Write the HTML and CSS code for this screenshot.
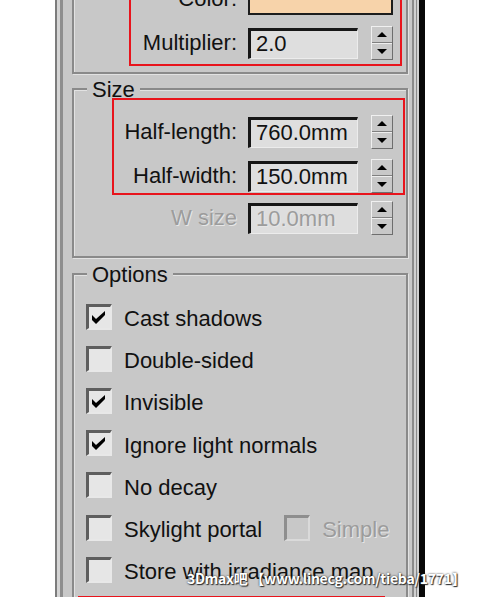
FILE: index.html
```html
<!DOCTYPE html>
<html lang="en">
<head>
    <meta charset="UTF-8">
    <meta name="viewport" content="width=device-width, initial-scale=1.0">
    <title>Area Light Parameters</title>
    <link rel="stylesheet" href="styles.css">
</head>
<body>

    <!-- Rollout panel -->
    <div class="panel">

        <!-- Intensity group (top part scrolled out of view) -->
        <div class="group group-intensity">
            <div class="mark mark-intensity">
                <div class="field-row">
                    <span class="field-label">Color:</span>
                    <span class="swatch"></span>
                </div>
                <div class="field-row">
                    <span class="field-label">Multiplier:</span>
                    <input class="field-input" type="text" value="2.0" readonly>
                    <span class="spinner"><span class="spin-up"></span><span class="spin-down"></span></span>
                </div>
            </div>
        </div>

        <!-- Size group -->
        <div class="group group-size">
            <div class="group-title">Size</div>
            <div class="mark mark-size">
                <div class="field-row">
                    <span class="field-label">Half-length:</span>
                    <input class="field-input" type="text" value="760.0mm" readonly>
                    <span class="spinner"><span class="spin-up"></span><span class="spin-down"></span></span>
                </div>
                <div class="field-row">
                    <span class="field-label">Half-width:</span>
                    <input class="field-input" type="text" value="150.0mm" readonly>
                    <span class="spinner"><span class="spin-up"></span><span class="spin-down"></span></span>
                </div>
            </div>
            <div class="field-row row-wsize disabled">
                <span class="field-label">W size</span>
                <input class="field-input" type="text" value="10.0mm" readonly>
                <span class="spinner"><span class="spin-up"></span><span class="spin-down"></span></span>
            </div>
        </div>

        <!-- Options group -->
        <div class="group group-options">
            <div class="group-title">Options</div>
            <ul class="check-list">
                <li class="check-row">
                    <span class="check"><svg width="21" height="21" viewBox="0 0 21 21"><polygon points="3,8 7,12 16,4 16,8 7,17 3,13" fill="#000"/></svg></span>Cast shadows
                </li>
                <li class="check-row">
                    <span class="check"></span>Double-sided
                </li>
                <li class="check-row">
                    <span class="check"><svg width="21" height="21" viewBox="0 0 21 21"><polygon points="3,8 7,12 16,4 16,8 7,17 3,13" fill="#000"/></svg></span>Invisible
                </li>
                <li class="check-row">
                    <span class="check"><svg width="21" height="21" viewBox="0 0 21 21"><polygon points="3,8 7,12 16,4 16,8 7,17 3,13" fill="#000"/></svg></span>Ignore light normals
                </li>
                <li class="check-row">
                    <span class="check"></span>No decay
                </li>
                <li class="check-row">
                    <span class="check"></span>Skylight portal
                    <span class="check check-simple"></span><span class="disabled">Simple</span>
                </li>
                <li class="check-row">
                    <span class="check"></span>Store with irradiance map
                </li>
            </ul>
            <div class="mark mark-options"></div>
        </div>
    </div>

    <div class="watermark">3Dmax吧 【www.linecg.com/tieba/1771】</div>

</body>
</html>
```

FILE: styles.css
```css
/* General Styling */
body {
    margin: 0;
    background: #fff;
    font-family: "Liberation Sans", Arial, sans-serif;
    color: #111;
    overflow: hidden;
}

/* Rollout panel with its bevelled edges */
.panel {
    box-sizing: border-box;
    width: 370px;
    margin: -36px 0 0 55px;
    padding: 0 11px 0 15px;
    background: #c8c8c8;
    border-left: 2px solid #7c7c7c;
    border-right: 6px solid #080808;
    box-shadow: inset 3px 0 0 #d4d4d4, inset 6px 0 0 #8e8e8e,
                inset -2px 0 0 #d0d0d0, inset -3px 0 0 #8a8a8a,
                inset -5px 0 0 #d0d0d0, inset -7px 0 0 #8a8a8a;
}

/* Etched group boxes */
.group {
    border: 2px solid #8a8a8a;
    box-shadow: inset 1px 1px 0 #e2e2e2, 1px 1px 0 #e2e2e2;
}

.group-size {
    margin-top: 14px;
    padding-bottom: 21px;
}

.group-options {
    margin-top: 15px;
    padding-bottom: 30px;
}

.group-title {
    display: table;
    margin: -12px 0 0 13px;
    padding: 0 5px;
    background: #c8c8c8;
    font-size: 22px;
    line-height: 24px;
}

.group-size .group-title {
    margin-bottom: -4px;
}

/* Red highlight boxes */
.mark {
    border: 2px solid #e8141c;
}

.mark-intensity {
    margin: 6px 4px 6px 55px;
    padding: 8px 7px 4px 0;
}

.mark-size {
    margin: 0 1px 0 38px;
    padding: 15px 10px 0 0;
}

.mark-options {
    margin: 3px 21px 0 4px;
    height: 40px;
}

/* Label / value / spinner rows */
.field-row {
    display: grid;
    grid-template-columns: 1fr 112px 22px;
    column-gap: 11px;
    align-items: center;
    height: 34px;
}

.field-row + .field-row {
    margin-top: 10px;
}

.row-wsize {
    margin-top: 6px;
    padding-right: 13px;
}

.field-label {
    text-align: right;
    font-size: 22px;
    line-height: 24px;
    white-space: nowrap;
}

.field-input {
    box-sizing: border-box;
    width: 110px;
    height: 31px;
    padding: 0 0 0 5px;
    border-style: solid;
    border-width: 3px 1px 1px 3px;
    border-color: #161616 #ececec #ececec #161616;
    background: #dedede;
    font: 22px "Liberation Sans", Arial, sans-serif;
    color: #111;
    outline: none;
}

.swatch {
    grid-column: 2 / 4;
    box-sizing: border-box;
    height: 31px;
    border: 2px solid #1c1c1c;
    background: #f7d3aa;
}

.spinner {
    box-sizing: border-box;
    display: flex;
    flex-direction: column;
    width: 22px;
    height: 34px;
    border: 1px solid;
    border-color: #f0f0f0 #6e6e6e #6e6e6e #f0f0f0;
    background: #c8c8c8;
}

.spin-up,
.spin-down {
    flex: 1;
    display: flex;
    align-items: center;
    justify-content: center;
}

.spin-up {
    border-bottom: 1px solid #808080;
}

.spin-down {
    border-top: 1px solid #eeeeee;
}

.spin-up::after {
    content: "";
    border-left: 5px solid transparent;
    border-right: 5px solid transparent;
    border-bottom: 5px solid #000;
}

.spin-down::after {
    content: "";
    border-left: 5px solid transparent;
    border-right: 5px solid transparent;
    border-top: 5px solid #000;
}

/* Greyed-out controls */
.disabled,
.disabled .field-label,
.disabled .field-input {
    color: #9c9c9c;
    text-shadow: 1px 1px 0 #e6e6e6;
}

/* Checkbox list */
.check-list {
    list-style: none;
    margin: 0;
    padding: 11px 0 0;
}

.check-row {
    display: flex;
    align-items: center;
    height: 42.2px;
    font-size: 22px;
    line-height: 24px;
    white-space: nowrap;
}

.check {
    flex: none;
    box-sizing: border-box;
    width: 26px;
    height: 26px;
    margin: 0 12px 5px 12px;
    border-style: solid;
    border-width: 3px 2px 2px 3px;
    border-color: #5e5e5e #e8e8e8 #e8e8e8 #5e5e5e;
    background: #e6e6e6;
}

.check svg {
    display: block;
}

.check-simple {
    margin-left: 22px;
    border-color: #8e8e8e #dadada #dadada #8e8e8e;
    background: #c8c8c8;
}

/* Forum watermark */
.watermark {
    position: absolute;
    left: 187px;
    top: 568px;
    font: bold 14px "Noto Sans CJK SC", sans-serif;
    letter-spacing: -0.25px;
    color: #fff;
    text-shadow: 0 0 2px #222, 1px 1px 1px #333;
    white-space: nowrap;
}
```
